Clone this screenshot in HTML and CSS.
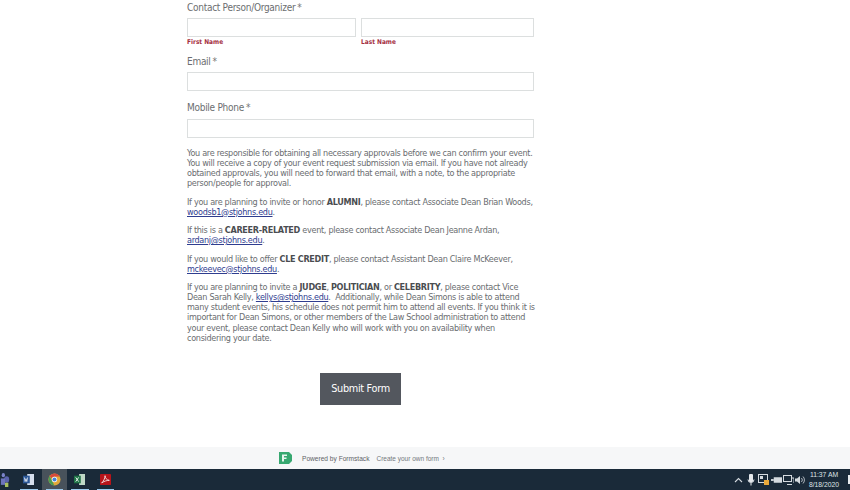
FILE: index.html
```html
<!DOCTYPE html>
<html lang="en">
<head>
    <meta charset="UTF-8">
    <meta name="viewport" content="width=device-width, initial-scale=1.0">
    <title>Event Request Form</title>
    <link rel="stylesheet" href="styles.css">
</head>
<body>
    <div class="page">
        <form class="form">
            <div class="field">
                <label class="field-label">Contact Person/Organizer<span class="req">*</span></label>
                <div class="name-row">
                    <div class="name-col first">
                        <input type="text" class="text-input">
                        <span class="sub-label">First Name</span>
                    </div>
                    <div class="name-col last">
                        <input type="text" class="text-input">
                        <span class="sub-label">Last Name</span>
                    </div>
                </div>
            </div>
            <div class="field email">
                <label class="field-label">Email<span class="req">*</span></label>
                <input type="text" class="text-input">
            </div>
            <div class="field phone">
                <label class="field-label">Mobile Phone<span class="req">*</span></label>
                <input type="text" class="text-input">
            </div>

            <div class="notes">
                <p>You are responsible for obtaining all necessary approvals before we can confirm your event. You will receive a copy of your event request submission via email. If you have not already obtained approvals, you will need to forward that email, with a note, to the appropriate person/people for approval.</p>
                <p>If you are planning to invite or honor <strong>ALUMNI</strong>, please contact Associate Dean Brian Woods, <a href="#">woodsb1@stjohns.edu</a>.</p>
                <p>If this is a <strong>CAREER-RELATED</strong> event, please contact Associate Dean Jeanne Ardan, <a href="#">ardanj@stjohns.edu</a>.</p>
                <p>If you would like to offer <strong>CLE CREDIT</strong>, please contact Assistant Dean Claire McKeever, <a href="#">mckeevec@stjohns.edu</a>.</p>
                <p>If you are planning to invite a <strong>JUDGE</strong>, <strong>POLITICIAN</strong>, or <strong>CELEBRITY</strong>, please contact Vice Dean Sarah Kelly, <a href="#">kellys@stjohns.edu</a>.&nbsp; Additionally, while Dean Simons is able to attend many student events, his schedule does not permit him to attend all events. If you think it is important for Dean Simons, or other members of the Law School administration to attend your event, please contact Dean Kelly who will work with you on availability when considering your date.</p>
            </div>

            <div class="submit-row">
                <button type="button" class="submit">Submit Form</button>
            </div>
        </form>

        <div class="powered">
            <svg class="fs-logo" width="13" height="12" viewBox="0 0 13 12">
                <path d="M0 0h10l3 3v6l-3 3H0z" fill="#37a870"/>
                <path d="M3 2.500h5v1.500H5v1.500h2.500V7H5v2.500H3z" fill="#e8f5ee"/>
            </svg>
            <span class="powered-main">Powered by Formstack</span>
            <span class="powered-link">Create your own form &nbsp;›</span>
        </div>

        <div class="taskbar">
            <div class="task-left">
                <div class="task-item teams">
                    <svg width="10" height="15" viewBox="0 0 12 14" preserveAspectRatio="none">
                        <circle cx="4" cy="3" r="2" fill="#7b83c9"/>
                        <circle cx="8" cy="7" r="3" fill="#5a62ab"/>
                        <rect x="1" y="6" width="5" height="6" fill="#6d74bd"/>
                        <rect x="6" y="10" width="4" height="4" fill="#a8c060"/>
                    </svg>
                </div>
                <div class="task-item open">
                    <svg width="11" height="11" viewBox="0 0 13 13">
                        <rect x="5" y="0" width="8" height="13" fill="#d6dfee"/>
                        <rect x="0" y="2" width="8" height="9" fill="#2b5797"/>
                        <path d="M1.500 4l1 5 1-3.500 1 3.500 1-5" fill="none" stroke="#fff" stroke-width=".8"/>
                    </svg>
                </div>
                <div class="task-item open active">
                    <svg width="13" height="13" viewBox="0 0 14 14">
                        <circle cx="7" cy="7" r="6.500" fill="#e2a93a"/>
                        <path d="M7 .5a6.500 6.500 0 0 1 5.600 3.200H7a3.300 3.300 0 0 0-3 2L1.700 3.200A6.500 6.500 0 0 1 7 .5z" fill="#d8493d"/>
                        <path d="M.5 7a6.500 6.500 0 0 1 1.200-3.800L4.500 8.500l2.300 5A6.500 6.500 0 0 1 .5 7z" fill="#4a9d55"/>
                        <circle cx="7" cy="7" r="2.900" fill="#fff"/>
                        <circle cx="7" cy="7" r="2.200" fill="#4a82d8"/>
                    </svg>
                </div>
                <div class="task-item open">
                    <svg width="11" height="11" viewBox="0 0 13 13">
                        <rect x="6" y="0" width="7" height="13" fill="#bfd8c6"/>
                        <rect x="0" y="2" width="8" height="9" fill="#1f7346"/>
                        <path d="M2 4l3.500 5M5.500 4L2 9" stroke="#fff" stroke-width="1"/>
                    </svg>
                </div>
                <div class="task-item open">
                    <svg width="11" height="11" viewBox="0 0 13 13">
                        <rect width="13" height="13" rx="1" fill="#b8141a"/>
                        <path d="M2 10.500C4 9 6 5 6 2c0 3 2 5 5 5.500C8 7.500 5 8.500 2 10.500z" fill="none" stroke="#fff" stroke-width=".9"/>
                    </svg>
                </div>
            </div>
            <div class="tray">
                <div class="tray-icons">
                    <svg width="9" height="6" viewBox="0 0 9 6"><path d="M1 5l3.500-3.500L8 5" fill="none" stroke="#d5dbe0" stroke-width="1.100"/></svg>
                    <svg width="8" height="12" viewBox="0 0 8 12"><rect x="2" y="0" width="4" height="8" rx="1" fill="#e4e8ec"/><path d="M1 5.500a3 3 0 0 0 6 0M4 9v2.500" fill="none" stroke="#e4e8ec"/></svg>
                    <svg width="11" height="11" viewBox="0 0 11 11"><rect x=".5" y=".5" width="9" height="8" fill="none" stroke="#d5dbe0"/><rect x="2" y="2" width="3" height="3" fill="#d5dbe0"/><rect x="6" y="6" width="5" height="5" fill="#e8a83a"/></svg>
                    <svg width="11" height="8" viewBox="0 0 12 8"><rect x="3" y="1" width="9" height="6" fill="#d5dbe0"/><rect x="0" y="3" width="3" height="2" fill="#d5dbe0"/></svg>
                    <svg width="11" height="10" viewBox="0 0 11 10"><rect x=".5" y=".5" width="8" height="6" fill="none" stroke="#d5dbe0"/><path d="M4 9.500h5M9 3h2v5" fill="none" stroke="#d5dbe0"/></svg>
                    <svg width="11" height="10" viewBox="0 0 11 10"><path d="M0 3.500h2L5 1v8L2 6.500H0z" fill="#d5dbe0"/><path d="M6.500 3a3 3 0 0 1 0 4M8 1.500a5 5 0 0 1 0 7" fill="none" stroke="#d5dbe0" stroke-width=".8"/></svg>
                </div>
                <div class="clock">
                    <span>11:37 AM</span>
                    <span>8/18/2020</span>
                </div>
                <div class="notify"></div>
            </div>
        </div>
    </div>
</body>
</html>
```

FILE: styles.css
```css
html, body {
    margin: 0;
    padding: 0;
    background: #fff;
}
.page {
    width: 850px;
    height: 490px;
    display: flex;
    flex-direction: column;
    overflow: hidden;
    font-family: "DejaVu Sans Condensed", "DejaVu Sans", sans-serif;
    font-stretch: condensed;
    color: #6a6d70;
}
.form {
    flex: 1;
    width: 347px;
    margin-left: 187px;
    padding-top: 1px;
}
.field-label {
    display: block;
    font-size: 10px;
    letter-spacing: -0.28px;
    line-height: 13px;
    color: #6b6e70;
}
.req {
    margin-left: 2px;
    color: #777;
}
.text-input {
    display: block;
    box-sizing: border-box;
    width: 100%;
    height: 19px;
    padding: 0 4px;
    border: 1px solid #dcdfdf;
    background: #fff;
    outline: none;
}
.name-row {
    display: flex;
    gap: 5px;
    margin-top: 4px;
}
.name-col.first {
    width: 169px;
}
.name-col.last {
    width: 173px;
}
.sub-label {
    display: block;
    margin-top: 1px;
    font-size: 6.500px;
    font-weight: bold;
    line-height: 9px;
    color: #a5303f;
}
.email {
    margin-top: 8px;
}
.email .text-input {
    margin-top: 4px;
}
.phone .text-input {
    margin-top: 5px;
}
.phone {
    margin-top: 10px;
}
.notes {
    margin-top: 10px;
    margin-right: -3px;
    font-size: 9px;
    letter-spacing: -0.3px;
    line-height: 10.100px;
    color: #6a6d70;
}
.notes p {
    margin: 0 0 8.300px;
}
.notes strong {
    color: #4a4d50;
}
.notes a {
    color: #2f3d8f;
}
.submit-row {
    display: flex;
    justify-content: center;
    margin-top: 30px;
}
.submit {
    width: 81px;
    height: 32px;
    padding: 0;
    border: none;
    background: #53575e;
    color: #fff;
    font-family: "DejaVu Sans Condensed", "DejaVu Sans", sans-serif;
    font-stretch: condensed;
    font-size: 10.800px;
    letter-spacing: -0.3px;
    white-space: nowrap;
}
.powered {
    flex: none;
    height: 22px;
    display: flex;
    align-items: center;
    padding-left: 279px;
    background: #f6f7f8;
    font-family: "Liberation Sans", Arial, sans-serif;
    font-size: 6.500px;
    color: #74787c;
}
.fs-logo {
    margin-right: 10px;
}
.powered-main {
    margin-right: 7px;
    font-size: 6.600px;
    color: #5f6367;
}
.taskbar {
    flex: none;
    height: 21px;
    display: flex;
    justify-content: space-between;
    background: #1a2a39;
}
.task-left {
    display: flex;
}
.task-item {
    position: relative;
    width: 25.600px;
    display: flex;
    align-items: center;
    justify-content: center;
}
.task-item.open::after {
    content: "";
    position: absolute;
    left: 4px;
    right: 4px;
    bottom: 0;
    height: 1px;
    background: #9ccbee;
}
.task-item.teams {
    width: 16px;
    justify-content: flex-start;
}
.task-item.active {
    background: #48525b;
}
.tray {
    display: flex;
    align-items: center;
}
.tray-icons {
    display: grid;
    grid-auto-flow: column;
    grid-auto-columns: 12.400px;
    justify-items: center;
    align-items: center;
}
.clock {
    display: flex;
    flex-direction: column;
    align-items: center;
    width: 28px;
    margin-left: 3px;
    font-family: "Liberation Sans", Arial, sans-serif;
    font-size: 6.800px;
    line-height: 10px;
    white-space: nowrap;
    color: #dfe3e6;
}
.notify {
    width: 2px;
    height: 9px;
    margin-left: 10px;
    background: #e8ebee;
}
```
